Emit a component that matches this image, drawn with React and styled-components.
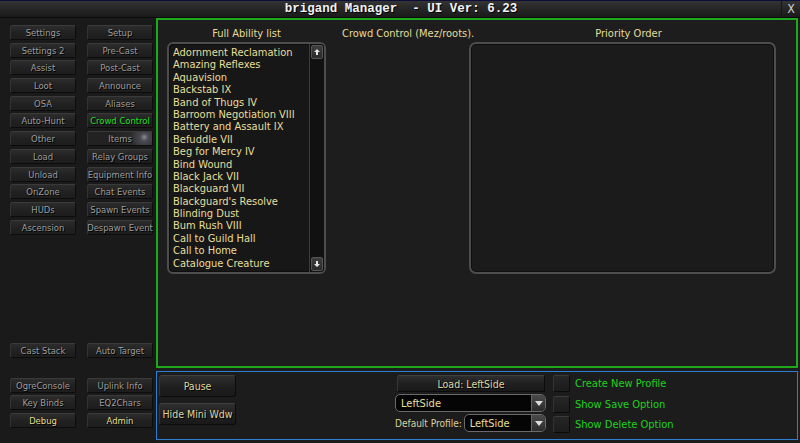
import React from 'react';
import styled, { createGlobalStyle } from 'styled-components';

const GlobalStyle = createGlobalStyle`
  html, body {
    margin: 0;
    padding: 0;
    background: #0e0e0e;
  }
  * { box-sizing: border-box; }
`;

const Window = styled.div`
  width: 800px;
  height: 443px;
  display: flex;
  flex-direction: column;
  background: #1c1c1c;
  font-family: "DejaVu Sans Condensed", "Liberation Sans", sans-serif;
  font-size: 11px;
  overflow: hidden;
`;

const TitleBar = styled.div`
  position: relative;
  height: 18px;
  flex: none;
  display: flex;
  align-items: center;
  justify-content: center;
  border-top: 1px solid #0d0d3a;
  background: linear-gradient(#343434, #232323 60%, #1a1a1a);
  border-bottom: 1px solid #0b0b0b;
`;

const Title = styled.div`
  font-family: "Liberation Mono", "Courier New", monospace;
  font-weight: bold;
  font-size: 12.5px;
  color: #f2f2f2;
  white-space: pre;
  text-shadow: 1px 1px 0 #000;
  margin-left: 2px;
`;

const CloseBox = styled.div`
  position: absolute;
  right: 0;
  top: 0;
  width: 19px;
  height: 17px;
  display: flex;
  align-items: center;
  justify-content: center;
  border-left: 1px solid #151515;
  font-family: "Liberation Mono", monospace;
  font-size: 12px;
  color: #d0d0d0;
`;

const Body = styled.div`
  flex: 1;
  display: flex;
`;

const Sidebar = styled.div`
  width: 156px;
  flex: none;
  display: flex;
  flex-direction: column;
  padding: 7px 0 15px 10px;
  background: #1a1a1a;
`;

const ButtonGrid = styled.div`
  display: grid;
  grid-template-columns: 66px 66px;
  column-gap: 11px;
  row-gap: 2.7px;
  margin-top: ${p => p.$top || 0}px;
`;

const Spacer = styled.div`
  flex: 1;
`;

const SideButton = styled.div`
  height: 15px;
  display: flex;
  align-items: center;
  justify-content: center;
  white-space: nowrap;
  font-size: 9.4px;
  color: ${p => p.$color || '#9c9c9c'};
  text-shadow: 1px 1px 0 #000;
  background: ${p => p.$glow
    ? 'radial-gradient(circle at 88% 40%, #8a8a96 0, #4a4a52 4px, #2a2a2c 14px, #222 30px)'
    : 'linear-gradient(#2c2c2c, #222 50%, #1d1d1d)'};
  border: 1px solid #0c0c0c;
  border-top-color: #3a3a3a;
  border-left-color: #333;
  border-radius: 2px;
`;

const Main = styled.div`
  flex: 1;
  display: flex;
  flex-direction: column;
  padding: 0 2px 3px 0;
  gap: 3px;
`;

const GreenPanel = styled.div`
  height: 350px;
  border: 2px solid #1ea81e;
  display: flex;
  padding: 7px 0 0 9px;
  background: #1d1d1d;
`;

const Column = styled.div`
  display: flex;
  flex-direction: column;
  width: ${p => p.$w}px;
  margin-left: ${p => p.$ml || 0}px;
`;

const Heading = styled.div`
  color: #e3dc9b;
  font-size: 11px;
  height: 15px;
  line-height: 13px;
  text-align: ${p => p.$align || 'center'};
  white-space: nowrap;
  padding-left: ${p => p.$pl || 0}px;
`;

const ListBox = styled.div`
  height: 232px;
  display: flex;
  border: 2px solid #4d4d4d;
  border-radius: 6px;
  background: #171717;
  box-shadow: inset 0 0 0 1px #0d0d0d;
  overflow: hidden;
`;

const Items = styled.div`
  flex: 1;
  padding: 3px 0 0 4px;
`;

const Item = styled.div`
  height: 12.4px;
  line-height: 12.4px;
  color: #e6df9c;
  font-size: 11px;
  white-space: nowrap;
`;

const ScrollBar = styled.div`
  width: 15px;
  display: flex;
  flex-direction: column;
  justify-content: space-between;
  border-left: 1px solid #3c3c3c;
  background: #111;
  padding: 1px 0;
`;

const ScrollBtn = styled.div`
  height: 14px;
  display: flex;
  align-items: center;
  justify-content: center;
  background: linear-gradient(#3e3e3e, #2a2a2a);
  border: 1px solid #555;
  border-radius: 2px;
  margin: 0 1px;
`;

const PriorityBox = styled.div`
  height: 232px;
  border: 2px solid #4d4d4d;
  border-radius: 7px;
  background: #1b1b1b;
  box-shadow: inset 0 0 0 1px #0e0e0e;
`;

const BluePanel = styled.div`
  height: 69px;
  border: 1px solid #2e7ed2;
  display: flex;
  padding: 3px 0 0 2px;
  background: #1c1c1c;
`;

const BigButtons = styled.div`
  width: 77px;
  display: flex;
  flex-direction: column;
  gap: 6px;
`;

const BigButton = styled.div`
  height: ${p => p.$h || 22}px;
  display: flex;
  align-items: center;
  justify-content: center;
  color: #ddd5a0;
  font-size: 10.5px;
  text-shadow: 1px 1px 0 #000;
  background: linear-gradient(#2e2e2e, #1f1f1f 55%, #191919);
  border: 1px solid #0b0b0b;
  border-top-color: #404040;
  border-left-color: #363636;
  border-radius: 3px;
`;

const Profile = styled.div`
  width: 151px;
  margin-left: 159px;
  display: flex;
  flex-direction: column;
  gap: 2px;
`;

const LoadButton = styled(BigButton)`
  margin: 0 1px 0 2px;
  border-radius: 2px;
`;

const Row = styled.div`
  height: 18px;
  display: flex;
  align-items: center;
  gap: 2px;
`;

const Label = styled.div`
  color: #d8d0a0;
  font-size: 10px;
  white-space: nowrap;
`;

const Select = styled.div`
  flex: ${p => (p.$inline ? 1 : 'none')};
  height: 18px;
  display: flex;
  align-items: center;
  background: #050505;
  border: 1px solid #6a6a6a;
  border-radius: 5px;
  overflow: hidden;
`;

const SelectText = styled.div`
  flex: 1;
  padding-left: 5px;
  color: #e6df9c;
  font-size: 11px;
`;

const SelectArrow = styled.div`
  width: 14px;
  height: 16px;
  display: flex;
  align-items: center;
  justify-content: center;
  background: linear-gradient(#4a4a4a, #2c2c2c);
  border-left: 1px solid #666;
  border-radius: 0 4px 4px 0;
`;

const Options = styled.div`
  margin-left: 7px;
  display: flex;
  flex-direction: column;
  gap: 3.5px;
`;

const OptionRow = styled.div`
  display: flex;
  align-items: center;
  gap: 5px;
`;

const Check = styled.div`
  width: 17px;
  height: 17px;
  background: linear-gradient(#262626, #1c1c1c);
  border: 1px solid #0a0a0a;
  border-top-color: #3a3a3a;
  border-left-color: #333;
  border-radius: 2px;
`;

const OptionText = styled.div`
  color: #1fd21f;
  font-size: 11px;
`;

const Arrow = ({ down }) => (
  <svg width="8" height="8" viewBox="0 0 8 8">
    {down ? (
      <path d="M3 1h2v3h2L4 7 1 4h2z" fill="#e6e6e6" />
    ) : (
      <path d="M4 1l3 3H5v3H3V4H1z" fill="#e6e6e6" />
    )}
  </svg>
);

const Caret = () => (
  <svg width="8" height="5" viewBox="0 0 8 5">
    <path d="M0 0h8L4 5z" fill="#dcdcdc" />
  </svg>
);

const topButtons = [
  ['Settings', 'Setup'],
  ['Settings 2', 'Pre-Cast'],
  ['Assist', 'Post-Cast'],
  ['Loot', 'Announce'],
  ['OSA', 'Aliases'],
  ['Auto-Hunt', 'Crowd Control'],
  ['Other', 'Items'],
  ['Load', 'Relay Groups'],
  ['Unload', 'Equipment Info'],
  ['OnZone', 'Chat Events'],
  ['HUDs', 'Spawn Events'],
  ['Ascension', 'Despawn Event'],
];

const abilities = [
  'Adornment Reclamation',
  'Amazing Reflexes',
  'Aquavision',
  'Backstab IX',
  'Band of Thugs IV',
  'Barroom Negotiation VIII',
  'Battery and Assault IX',
  'Befuddle VII',
  'Beg for Mercy IV',
  'Bind Wound',
  'Black Jack VII',
  'Blackguard VII',
  "Blackguard's Resolve",
  'Blinding Dust',
  'Bum Rush VIII',
  'Call to Guild Hall',
  'Call to Home',
  'Catalogue Creature',
];

const options = ['Create New Profile', 'Show Save Option', 'Show Delete Option'];

export default function App() {
  return (
    <>
      <GlobalStyle />
      <Window>
        <TitleBar>
          <Title>{'brigand Manager  - UI Ver: 6.23'}</Title>
          <CloseBox>X</CloseBox>
        </TitleBar>
        <Body>
          <Sidebar>
            <ButtonGrid>
              {topButtons.flat().map(name => (
                <SideButton
                  key={name}
                  $color={name === 'Crowd Control' ? '#22e022' : undefined}
                  $glow={name === 'Items'}
                >
                  {name}
                </SideButton>
              ))}
            </ButtonGrid>
            <Spacer />
            <ButtonGrid>
              <SideButton>Cast Stack</SideButton>
              <SideButton>Auto Target</SideButton>
            </ButtonGrid>
            <ButtonGrid $top={20}>
              <SideButton>OgreConsole</SideButton>
              <SideButton>Uplink Info</SideButton>
              <SideButton>Key Binds</SideButton>
              <SideButton>EQ2Chars</SideButton>
              <SideButton $color="#e6dc8a">Debug</SideButton>
              <SideButton $color="#e6dc8a">Admin</SideButton>
            </ButtonGrid>
          </Sidebar>
          <Main>
            <GreenPanel>
              <Column $w={159}>
                <Heading>Full Ability list</Heading>
                <ListBox>
                  <Items>
                    {abilities.map(a => (
                      <Item key={a}>{a}</Item>
                    ))}
                  </Items>
                  <ScrollBar>
                    <ScrollBtn><Arrow /></ScrollBtn>
                    <ScrollBtn><Arrow down /></ScrollBtn>
                  </ScrollBar>
                </ListBox>
              </Column>
              <Column $w={120} $ml={16}>
                <Heading $align="left">Crowd Control (Mez/roots).</Heading>
              </Column>
              <Column $w={307} $ml={7}>
                <Heading $pl={12}>Priority Order</Heading>
                <PriorityBox />
              </Column>
            </GreenPanel>
            <BluePanel>
              <BigButtons>
                <BigButton>Pause</BigButton>
                <BigButton>Hide Mini Wdw</BigButton>
              </BigButtons>
              <Profile>
                <LoadButton $h={17}>Load: LeftSide</LoadButton>
                <Select>
                  <SelectText>LeftSide</SelectText>
                  <SelectArrow><Caret /></SelectArrow>
                </Select>
                <Row>
                  <Label>Default Profile:</Label>
                  <Select $inline>
                    <SelectText>LeftSide</SelectText>
                    <SelectArrow><Caret /></SelectArrow>
                  </Select>
                </Row>
              </Profile>
              <Options>
                {options.map(o => (
                  <OptionRow key={o}>
                    <Check />
                    <OptionText>{o}</OptionText>
                  </OptionRow>
                ))}
              </Options>
            </BluePanel>
          </Main>
        </Body>
      </Window>
    </>
  );
}
